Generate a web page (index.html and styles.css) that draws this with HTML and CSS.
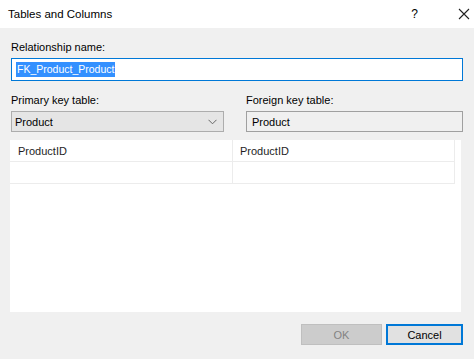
FILE: index.html
```html
<!DOCTYPE html>
<html>
<head>
<meta charset="utf-8">
<link rel="stylesheet" href="styles.css">
</head>
<body>
<div class="dialog">
  <div class="titlebar">
    <span class="title">Tables and Columns</span>
    <span class="help">?</span>
    <svg class="close" width="12" height="12" viewBox="0 0 12 12"><path d="M1 1 L11 11 M11 1 L1 11" stroke="#222" stroke-width="1.1" fill="none"/></svg>
  </div>
  <div class="content">
    <div class="label first">Relationship name:</div>
    <div class="namebox"><span class="sel">FK_Product_Product</span></div>
    <div class="keys">
      <div class="keycol left">
        <div class="label">Primary key table:</div>
        <div class="combo"><span>Product</span>
          <svg class="chev" width="9" height="6" viewBox="0 0 9 6"><path d="M0.5 0.8 L4.5 4.8 L8.5 0.8" stroke="#666" stroke-width="1" fill="none"/></svg>
        </div>
      </div>
      <div class="keycol right">
        <div class="label">Foreign key table:</div>
        <div class="readonly">Product</div>
      </div>
    </div>
    <div class="grid">
      <div class="row">
        <div class="cell c1">ProductID</div>
        <div class="cell c2">ProductID</div>
      </div>
      <div class="row">
        <div class="cell c1"></div>
        <div class="cell c2"></div>
      </div>
    </div>
    <div class="buttons">
      <div class="btn ok">OK</div>
      <div class="btn cancel">Cancel</div>
    </div>
  </div>
</div>
</body>
</html>
```

FILE: styles.css
```css
html, body {
  margin: 0;
  padding: 0;
}
body {
  width: 474px;
  height: 359px;
  background: #f0f0f0;
  font-family: "Liberation Sans", Arial, sans-serif;
  font-size: 11px;
  color: #000;
  overflow: hidden;
}
.dialog {
  width: 474px;
  height: 359px;
  display: flex;
  flex-direction: column;
}
.titlebar {
  height: 28px;
  background: #fff;
  display: flex;
  align-items: center;
  padding-left: 8px;
  box-sizing: border-box;
}
.title {
  font-size: 11.5px;
  flex: 1;
  margin-top: -1px;
}
.help {
  font-size: 12px;
  margin-right: 40px;
  margin-top: -1px;
}
.close {
  margin-right: 4px;
  margin-top: -1px;
}
.content {
  padding: 0 11px 0 11px;
  display: flex;
  flex-direction: column;
}
.label {
  height: 14px;
  line-height: 14px;
  color: #000;
}
.label.first {
  margin-top: 12px;
  margin-bottom: 4px;
}
.namebox {
  height: 23px;
  border: 1px solid #0078d7;
  background: #fff;
  box-sizing: border-box;
  display: flex;
  align-items: center;
  padding-left: 4px;
}
.sel {
  background: #3390ff;
  color: #fff;
  font-size: 10.5px;
  line-height: 15px;
  padding: 0 1px;
}
.keys {
  display: flex;
  gap: 22px;
  margin-top: 12px;
}
.keycol .label {
  margin-bottom: 4px;
}
.keycol.left {
  width: 213px;
}
.keycol.right {
  width: 217px;
}
.combo {
  height: 21px;
  box-sizing: border-box;
  border: 1px solid #adadad;
  background: #e5e5e5;
  display: flex;
  align-items: center;
  justify-content: space-between;
  padding: 0 6px 0 3px;
  font-size: 11px;
}
.chev {
  margin-top: 1px;
}
.readonly {
  height: 21px;
  box-sizing: border-box;
  border: 1px solid #a0a0a0;
  background: #f0f0f0;
  display: flex;
  align-items: center;
  padding-left: 5px;
  font-size: 11px;
}
.grid {
  margin-top: 8px;
  margin-left: -1px;
  width: 451px;
  height: 172px;
  background: #fff;
  box-sizing: border-box;
  padding-right: 6px;
}
.row {
  display: flex;
  height: 21px;
  border-bottom: 1px solid #ececec;
  border-right: 1px solid #ececec;
}
.cell {
  display: flex;
  align-items: center;
  padding-left: 8px;
  font-size: 11px;
  color: #1e1e1e;
  box-sizing: border-box;
}
.cell.c1 {
  width: 223px;
  border-right: 1px solid #ececec;
}
.cell.c2 {
  flex: 1;
  padding-left: 7px;
}
.buttons {
  display: flex;
  justify-content: flex-end;
  gap: 4px;
  margin-top: 12px;
}
.btn {
  height: 21px;
  box-sizing: border-box;
  display: flex;
  align-items: center;
  justify-content: center;
  font-size: 11px;
}
.ok {
  width: 81px;
  background: #cccccc;
  border: 1px solid #bfbfbf;
  color: #838383;
}
.cancel {
  width: 77px;
  background: #e1e1e1;
  border: 2px solid #0078d7;
  color: #000;
}
```
